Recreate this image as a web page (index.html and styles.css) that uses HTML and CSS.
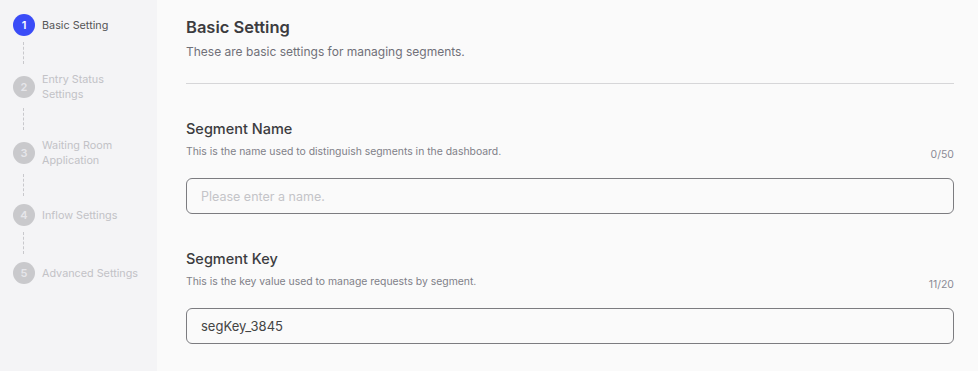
FILE: index.html
```html
<!DOCTYPE html>
<html lang="en">
<head>
    <meta charset="UTF-8">
    <meta name="viewport" content="width=device-width, initial-scale=1.0">
    <title>Segment Settings</title>
    <link rel="stylesheet" href="styles.css">
</head>
<body>

    <!-- Step navigation -->
    <aside class="steps">
        <div class="step active">
            <span class="step-num">1</span>
            <span class="step-label">Basic Setting</span>
        </div>
        <div class="step-line"></div>
        <div class="step">
            <span class="step-num">2</span>
            <span class="step-label">Entry Status<br>Settings</span>
        </div>
        <div class="step-line"></div>
        <div class="step">
            <span class="step-num">3</span>
            <span class="step-label">Waiting Room<br>Application</span>
        </div>
        <div class="step-line"></div>
        <div class="step">
            <span class="step-num">4</span>
            <span class="step-label">Inflow Settings</span>
        </div>
        <div class="step-line"></div>
        <div class="step">
            <span class="step-num">5</span>
            <span class="step-label">Advanced Settings</span>
        </div>
    </aside>

    <!-- Form content -->
    <main class="content">
        <div class="page-head">
            <h1>Basic Setting</h1>
            <p>These are basic settings for managing segments.</p>
        </div>

        <div class="field">
            <h2>Segment Name</h2>
            <div class="field-info">
                <span class="field-desc">This is the name used to distinguish segments in the dashboard.</span>
                <span class="field-count">0/50</span>
            </div>
            <input type="text" class="field-input" placeholder="Please enter a name.">
        </div>

        <div class="field">
            <h2>Segment Key</h2>
            <div class="field-info">
                <span class="field-desc">This is the key value used to manage requests by segment.</span>
                <span class="field-count">11/20</span>
            </div>
            <input type="text" class="field-input" value="segKey_3845">
        </div>
    </main>

</body>
</html>
```

FILE: styles.css
```css
body {
    display: flex;
    margin: 0;
    height: 100vh;
    background: #fafafa;
    font-family: 'Inter', 'Noto Sans', sans-serif;
    color: #333;
    overflow: hidden;
}
.steps {
    width: 157px;
    flex-shrink: 0;
    background: #f4f4f6;
    padding: 14px 0 0 13px;
    box-sizing: border-box;
}
.step {
    display: flex;
    align-items: center;
    gap: 7px;
}
.step-num {
    width: 22px;
    height: 22px;
    border-radius: 50%;
    background: #c9c9cc;
    color: #e6e6ea;
    font-size: 11px;
    font-weight: 600;
    display: flex;
    align-items: center;
    justify-content: center;
    flex-shrink: 0;
}
.step-label {
    font-size: 10.8px;
    line-height: 15px;
    color: #c2c2c6;
}
.step.active .step-num {
    background: #3a4cf7;
    color: #fff;
}
.step.active .step-label {
    color: #555;
}
.step-line {
    height: 22px;
    margin: 6px 0 8px 10px;
    border-left: 1px dashed #c8c8cc;
}
.content {
    flex: 1;
    padding: 15px 24px 0 29px;
}
.page-head h1 {
    margin: 0;
    font-size: 16.5px;
    line-height: 24px;
    font-weight: 600;
    color: #3c3c40;
}
.page-head p {
    margin: 3px 0 0;
    font-size: 12px;
    line-height: 20px;
    color: #707078;
}
.page-head {
    padding-bottom: 21px;
    border-bottom: 1px solid #d6d6d8;
    margin-bottom: 34px;
}
.field {
    margin-bottom: 34px;
}
.field h2 {
    margin: 0;
    font-size: 14.5px;
    line-height: 22px;
    font-weight: 500;
    color: #3c3c40;
}
.field-info {
    display: flex;
    justify-content: space-between;
    align-items: flex-start;
    margin-top: 4px;
}
.field-desc {
    font-size: 10.4px;
    line-height: 16px;
    color: #808088;
}
.field-count {
    margin-top: 3px;
    font-size: 10.5px;
    line-height: 16px;
    color: #8a8a96;
}
.field-input {
    display: block;
    width: 100%;
    height: 36px;
    margin-top: 15px;
    box-sizing: border-box;
    padding: 0 14px;
    border: 1px solid #7c7c80;
    border-radius: 6px;
    background: #fafafa;
    font-family: inherit;
    font-size: 13px;
    color: #444;
}
.field-input::placeholder {
    font-size: 12.5px;
    color: #c4c4c8;
}
```
